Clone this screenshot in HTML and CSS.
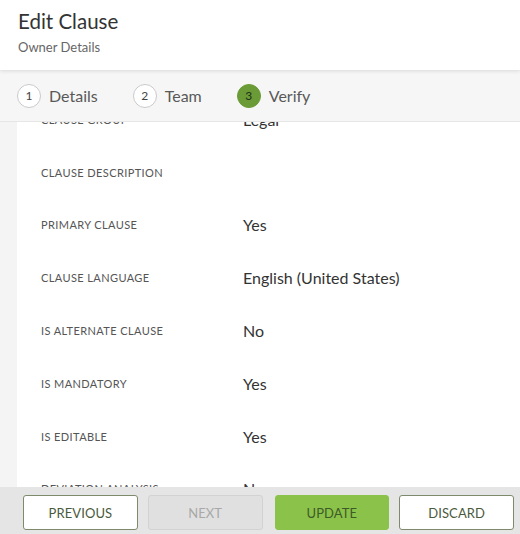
FILE: index.html
```html
<!DOCTYPE html>
<html>
<head>
<meta charset="utf-8">
<link rel="stylesheet" href="styles.css">
</head>
<body>
<div class="app">
  <header class="header">
    <h1 class="title">Edit Clause</h1>
    <div class="subtitle">Owner Details</div>
  </header>
  <nav class="steps">
    <div class="step"><span class="num">1</span><span class="step-label">Details</span></div>
    <div class="step"><span class="num">2</span><span class="step-label">Team</span></div>
    <div class="step active"><span class="num">3</span><span class="step-label">Verify</span></div>
  </nav>
  <main class="content">
    <div class="rows">
      <div class="row"><div class="label">Clause Group</div><div class="value">Legal</div></div>
      <div class="row"><div class="label">Clause Description</div><div class="value"></div></div>
      <div class="row"><div class="label">Primary Clause</div><div class="value">Yes</div></div>
      <div class="row"><div class="label">Clause Language</div><div class="value">English (United States)</div></div>
      <div class="row"><div class="label">Is Alternate Clause</div><div class="value">No</div></div>
      <div class="row"><div class="label">Is Mandatory</div><div class="value">Yes</div></div>
      <div class="row"><div class="label">Is Editable</div><div class="value">Yes</div></div>
      <div class="row"><div class="label">Deviation Analysis</div><div class="value">No</div></div>
    </div>
  </main>
  <footer class="footer">
    <button class="btn btn-outline">PREVIOUS</button>
    <button class="btn btn-disabled">NEXT</button>
    <button class="btn btn-primary">UPDATE</button>
    <button class="btn btn-outline">DISCARD</button>
  </footer>
</div>
</body>
</html>
```
FILE: styles.css
```css
* { box-sizing: border-box; }
html, body { margin: 0; padding: 0; }
body {
  font-family: Lato, "Open Sans", sans-serif;
  background: #fff;
  color: #333;
}
.app {
  width: 520px;
  height: 534px;
  display: flex;
  flex-direction: column;
  overflow: hidden;
}
.header {
  height: 70px;
  flex: none;
  background: #fff;
  padding: 8px 18px 0;
  position: relative;
  z-index: 2;
  box-shadow: 0 1px 4px rgba(0,0,0,0.12);
}
.title {
  margin: 0;
  font-size: 20.5px;
  font-weight: 400;
  color: #333;
  line-height: 26px;
}
.subtitle {
  margin-top: 5px;
  font-size: 13px;
  color: #666;
  line-height: 16px;
}
.steps {
  height: 52px;
  flex: none;
  background: #f6f6f6;
  border-bottom: 1px solid #e6e6e6;
  display: flex;
  align-items: center;
  padding: 0 0 0 17px;
  gap: 35px;
  position: relative;
  z-index: 1;
}
.step {
  display: flex;
  align-items: center;
  gap: 8px;
}
.num {
  width: 24px;
  height: 24px;
  border-radius: 50%;
  border: 1.5px solid #cacaca;
  display: flex;
  align-items: center;
  justify-content: center;
  font-size: 12px;
  color: #444;
  background: #fff;
}
.step.active .num {
  background: #6b9b37;
  border-color: #6b9b37;
  color: #22301a;
}
.step-label {
  font-size: 16px;
  color: #595959;
}
.content {
  flex: 1;
  overflow: hidden;
  background: #f4f4f4;
  padding-left: 17px;
}
.rows {
  background: #fff;
  margin-top: -29px;
  padding-left: 24px;
}
.row {
  height: 52.8px;
  display: flex;
  align-items: center;
}
.label {
  width: 202px;
  flex: none;
  font-size: 11px;
  text-transform: uppercase;
  color: #555;
  letter-spacing: 0.4px;
}
.value {
  font-size: 16px;
  color: #333;
}
.footer {
  height: 47px;
  flex: none;
  background: #e5e5e5;
  display: flex;
  align-items: flex-start;
  padding: 8px 6px 0 23px;
  gap: 10px;
}
.btn {
  width: 115px;
  height: 35px;
  border-radius: 3px;
  font-family: Lato, "Open Sans", sans-serif;
  font-size: 13px;
  padding: 0;
  letter-spacing: 0.1px;
}
.btn-outline {
  background: #fff;
  border: 1px solid #7d8a6c;
  color: #4a5a3c;
}
.btn-disabled {
  background: #e0e0e0;
  border: 1px solid #d2d2d2;
  color: #a8a8a8;
}
.btn-primary {
  background: #8bc34a;
  border: 1px solid #8bc34a;
  color: #3d5a27;
  margin-left: 2px;
}
```
